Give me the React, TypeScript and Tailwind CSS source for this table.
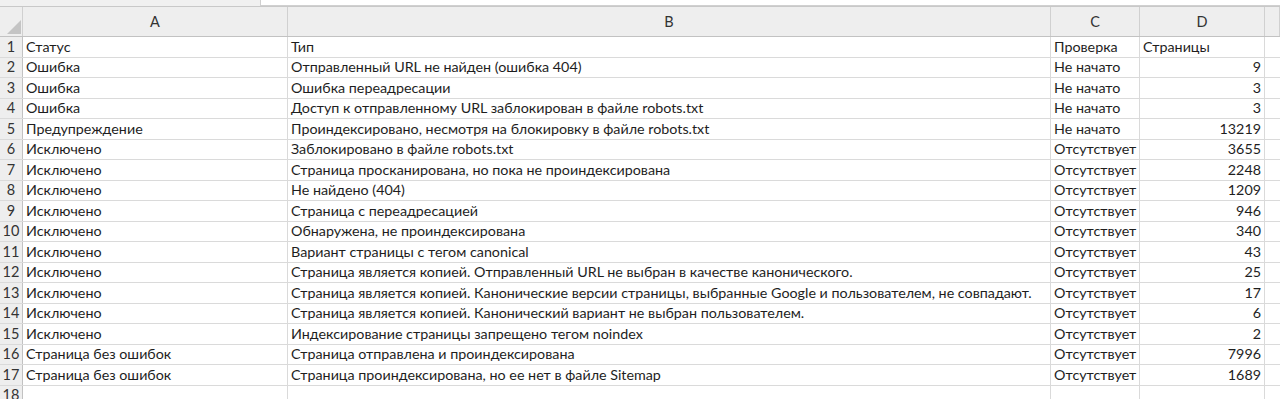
import React from 'react';

const rows: [string, string, string, string][] = [
  ['Статус', 'Тип', 'Проверка', 'Страницы'],
  ['Ошибка', 'Отправленный URL не найден (ошибка 404)', 'Не начато', '9'],
  ['Ошибка', 'Ошибка переадресации', 'Не начато', '3'],
  ['Ошибка', 'Доступ к отправленному URL заблокирован в файле robots.txt', 'Не начато', '3'],
  ['Предупреждение', 'Проиндексировано, несмотря на блокировку в файле robots.txt', 'Не начато', '13219'],
  ['Исключено', 'Заблокировано в файле robots.txt', 'Отсутствует', '3655'],
  ['Исключено', 'Страница просканирована, но пока не проиндексирована', 'Отсутствует', '2248'],
  ['Исключено', 'Не найдено (404)', 'Отсутствует', '1209'],
  ['Исключено', 'Страница с переадресацией', 'Отсутствует', '946'],
  ['Исключено', 'Обнаружена, не проиндексирована', 'Отсутствует', '340'],
  ['Исключено', 'Вариант страницы с тегом canonical', 'Отсутствует', '43'],
  ['Исключено', 'Страница является копией. Отправленный URL не выбран в качестве канонического.', 'Отсутствует', '25'],
  ['Исключено', 'Страница является копией. Канонические версии страницы, выбранные Google и пользователем, не совпадают.', 'Отсутствует', '17'],
  ['Исключено', 'Страница является копией. Канонический вариант не выбран пользователем.', 'Отсутствует', '6'],
  ['Исключено', 'Индексирование страницы запрещено тегом noindex', 'Отсутствует', '2'],
  ['Страница без ошибок', 'Страница отправлена и проиндексирована', 'Отсутствует', '7996'],
  ['Страница без ошибок', 'Страница проиндексирована, но ее нет в файле Sitemap', 'Отсутствует', '1689'],
  ['', '', '', ''],
];

const cols = 'grid grid-cols-[23px_265px_763px_89px_125px_1fr]';

export default function App() {
  return (
    <div className="w-[1280px] h-[399px] overflow-hidden bg-white text-[#1e1e1e] font-['Lato','Liberation_Sans',sans-serif] text-[14.3px] leading-none">
      {/* formula bar strip */}
      <div className="h-[7px] flex bg-[#f0f0f0] border-b border-[#c8c8c8]">
        <div className="w-[260px]" />
        <div className="flex-1 bg-white border-l border-b border-[#d0d0d0]" />
      </div>

      {/* column headers */}
      <div className={`${cols} h-[30px] bg-[#eeeeee] border-b border-[#c2c2c2] text-[#333] text-[14.5px]`}>
        <div className="relative border-r border-[#d0d0d0]">
          <svg className="absolute left-[7px] top-[13px]" width="14" height="14" viewBox="0 0 14 14">
            <polygon points="14,0 14,14 0,14" fill="#c4c4c4" />
          </svg>
        </div>
        {['A', 'B', 'C', 'D', ''].map((c, i) => (
          <div key={i} className="flex items-center justify-center pt-[2px] border-r border-[#d0d0d0]">
            {c}
          </div>
        ))}
      </div>

      {rows.map((r, i) => (
        <div key={i} className={`${cols} h-[20.5px] border-b border-[#dadada]`}>
          <div className="flex items-center justify-center bg-[#eeeeee] border-r border-[#c2c2c2] text-[#333] text-[14.5px]">
            {i + 1}
          </div>
          <div className="flex items-center pl-[3px] border-r border-[#dadada] whitespace-nowrap">{r[0]}</div>
          <div className="flex items-center pl-[3px] border-r border-[#dadada] whitespace-nowrap">{r[1]}</div>
          <div className="flex items-center pl-[3px] border-r border-[#dadada] whitespace-nowrap">{r[2]}</div>
          <div
            className={`flex items-center border-r border-[#dadada] whitespace-nowrap ${
              i === 0 ? 'pl-[3px]' : 'justify-end pr-[3px]'
            }`}
          >
            {r[3]}
          </div>
          <div />
        </div>
      ))}
    </div>
  );
}
